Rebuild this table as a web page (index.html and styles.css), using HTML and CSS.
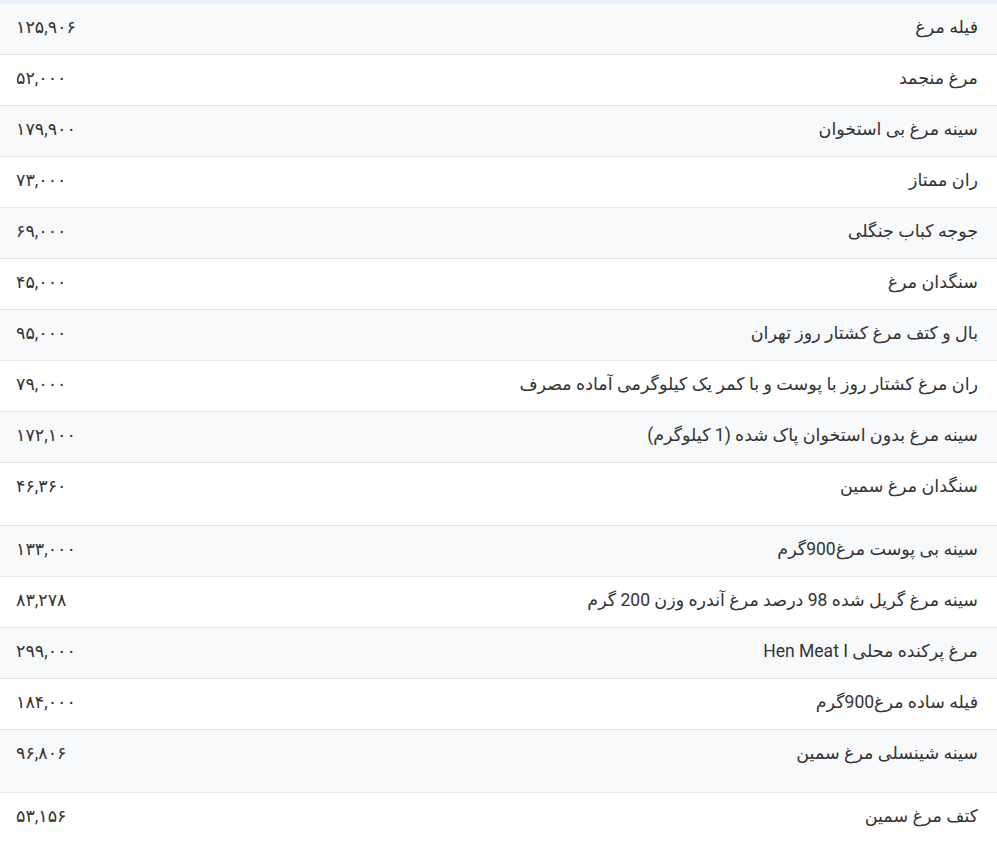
FILE: index.html
```html
<!DOCTYPE html>
<html lang="fa" dir="rtl">
<head>
<meta charset="utf-8">
<title>قیمت مرغ</title>
<link rel="stylesheet" href="styles.css">
</head>
<body>
<div class="wrap">
<table class="prices">
<tbody>
<tr><td class="name">فیله مرغ</td><td class="price">۱۲۵,۹۰۶</td></tr>
<tr><td class="name">مرغ منجمد</td><td class="price">۵۲,۰۰۰</td></tr>
<tr><td class="name">سینه مرغ بی استخوان</td><td class="price">۱۷۹,۹۰۰</td></tr>
<tr><td class="name">ران ممتاز</td><td class="price">۷۳,۰۰۰</td></tr>
<tr><td class="name">جوجه کباب جنگلی</td><td class="price">۶۹,۰۰۰</td></tr>
<tr><td class="name">سنگدان مرغ</td><td class="price">۴۵,۰۰۰</td></tr>
<tr><td class="name">بال و کتف مرغ کشتار روز تهران</td><td class="price">۹۵,۰۰۰</td></tr>
<tr><td class="name">ران مرغ کشتار روز با پوست و با کمر یک کیلوگرمی آماده مصرف</td><td class="price">۷۹,۰۰۰</td></tr>
<tr><td class="name">سینه مرغ بدون استخوان پاک شده (1 کیلوگرم)</td><td class="price">۱۷۲,۱۰۰</td></tr>
<tr class="tall"><td class="name">سنگدان مرغ سمین</td><td class="price">۴۶,۳۶۰</td></tr>
<tr><td class="name">سینه بی پوست مرغ900گرم</td><td class="price">۱۳۳,۰۰۰</td></tr>
<tr><td class="name">سینه مرغ گریل شده 98 درصد مرغ آندره وزن 200 گرم</td><td class="price">۸۳,۲۷۸</td></tr>
<tr><td class="name">مرغ پرکنده محلی Hen Meat I</td><td class="price">۲۹۹,۰۰۰</td></tr>
<tr><td class="name">فیله ساده مرغ900گرم</td><td class="price">۱۸۴,۰۰۰</td></tr>
<tr class="tall"><td class="name">سینه شینسلی مرغ سمین</td><td class="price">۹۶,۸۰۶</td></tr>
<tr class="tall"><td class="name">کتف مرغ سمین</td><td class="price">۵۳,۱۵۶</td></tr>
</tbody>
</table>
</div>
</body>
</html>
```
FILE: styles.css
```css
html, body {
  margin: 0;
  padding: 0;
  background: #ffffff;
}
body {
  font-family: Roboto, "DejaVu Sans", sans-serif;
  color: #333333;
  font-size: 17.5px;
}
.wrap {
  border-top: 4px solid #e8f0fb;
}
.prices {
  width: 100%;
  border-collapse: collapse;
}
.prices tr {
  border-bottom: 1px solid #e4e6e9;
}
.prices tr:nth-child(odd) {
  background: #f8f9fb;
}
.prices td {
  height: 51px;
  box-sizing: border-box;
  padding: 12px 19px 12px 16px;
  line-height: 22px;
  vertical-align: top;
}
.prices tr:first-child td {
  height: 50px;
}
.prices tr.tall td {
  height: 63px;
}
.prices td.name {
  text-align: right;
}
.prices td.price {
  text-align: left;
  direction: ltr;
  width: 160px;
}
```
